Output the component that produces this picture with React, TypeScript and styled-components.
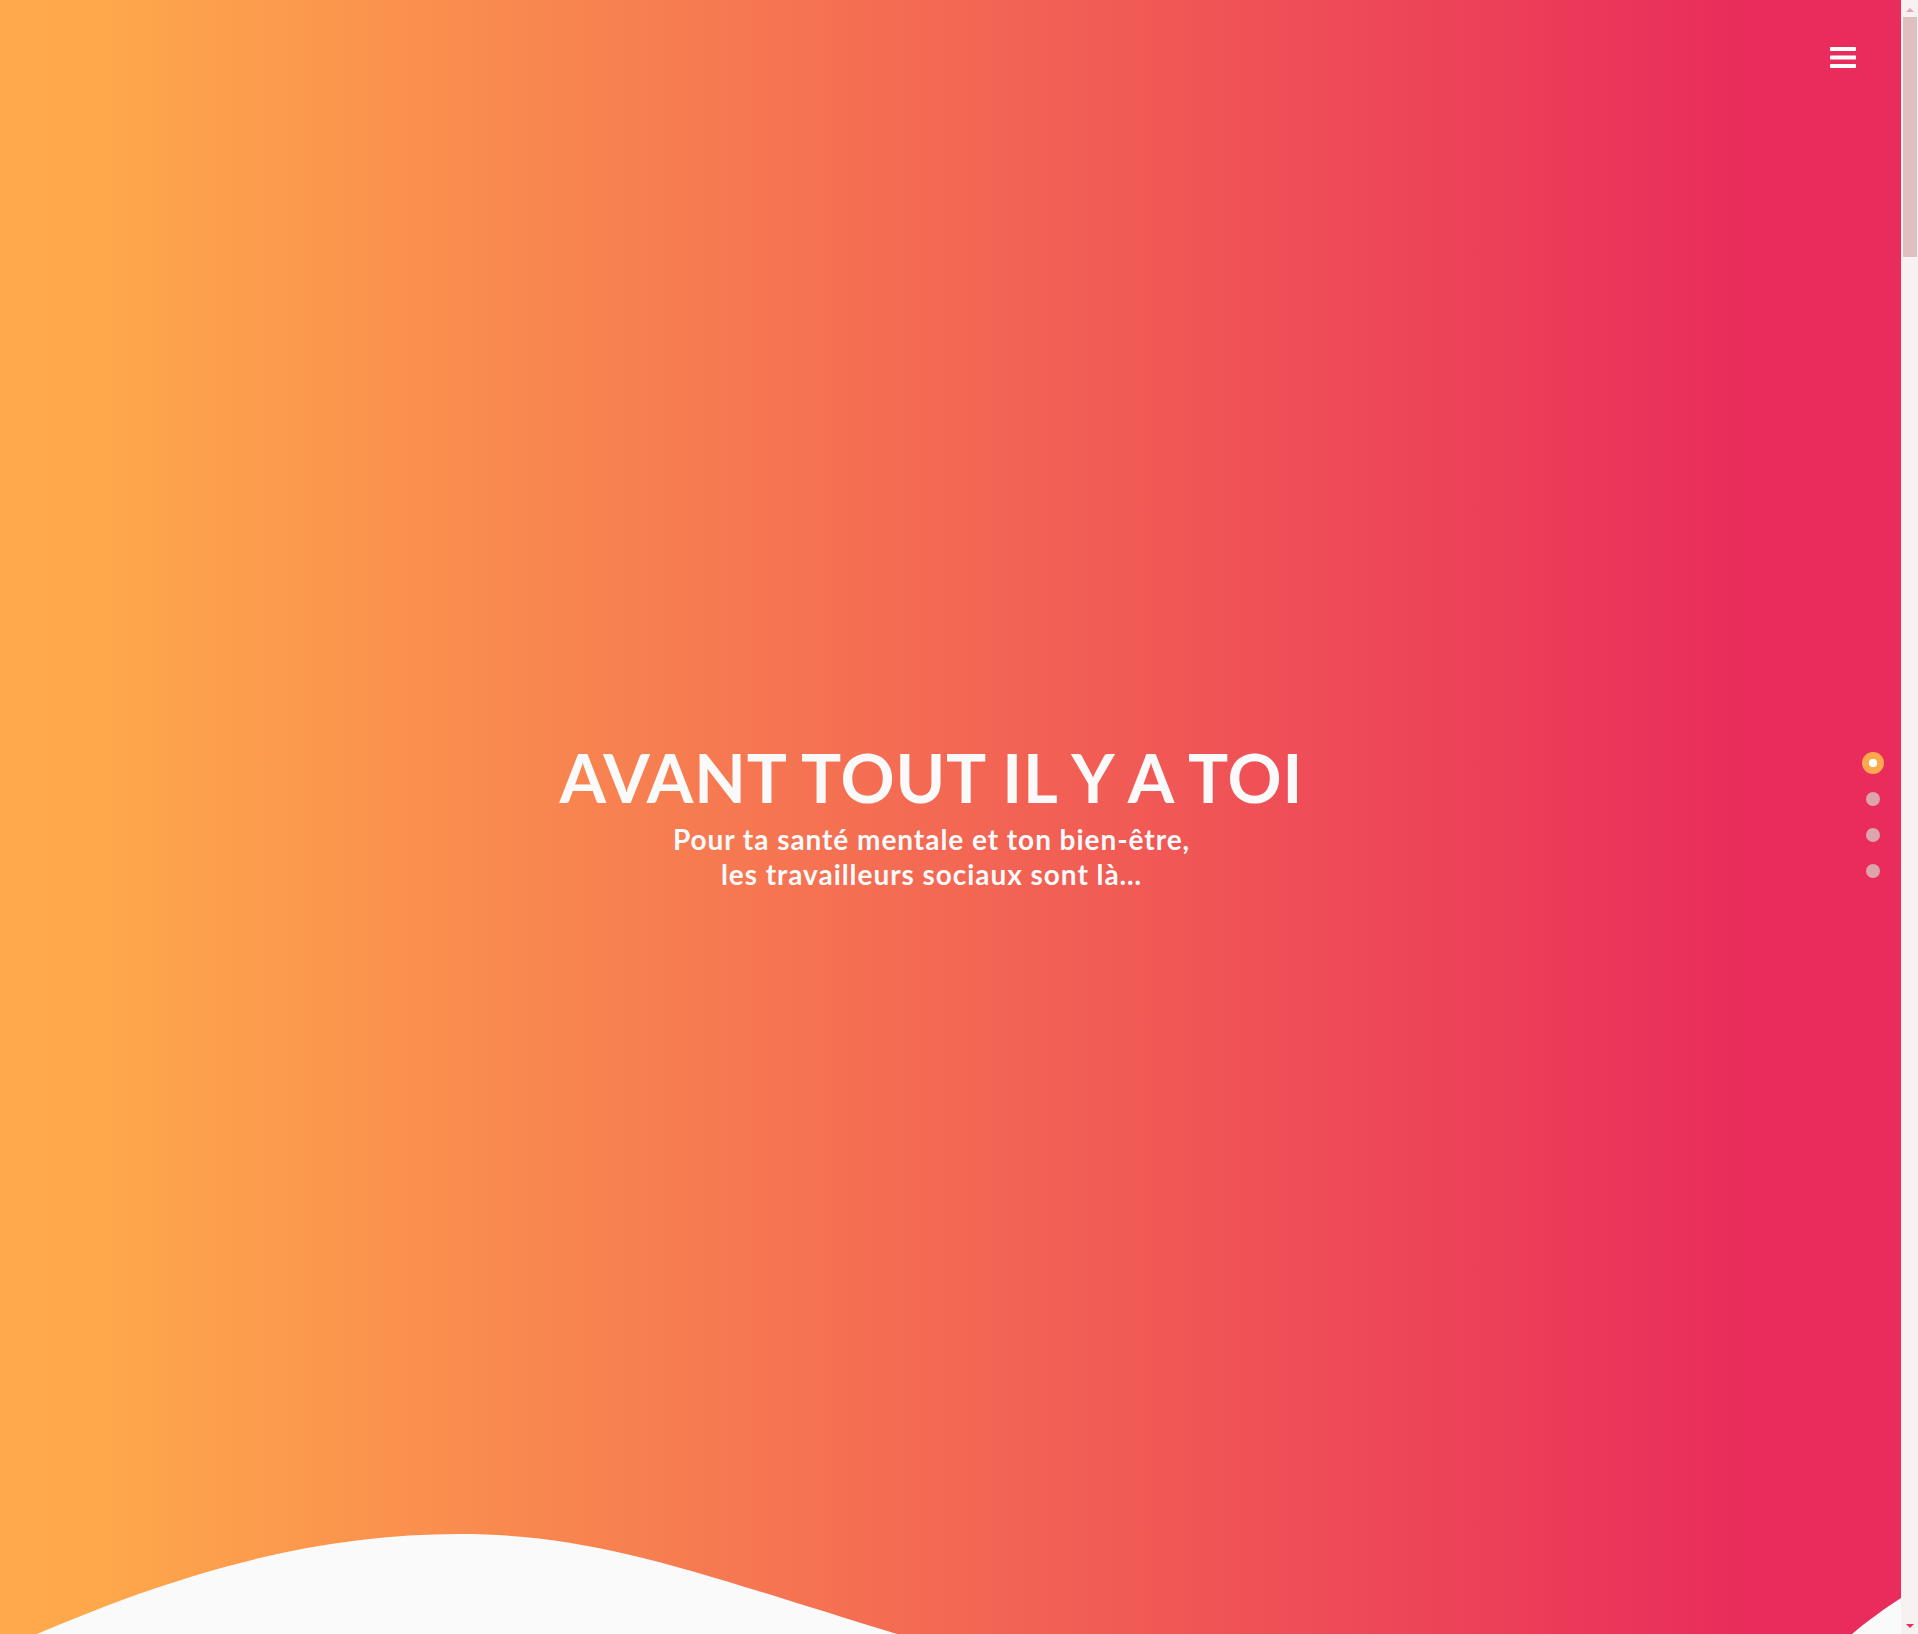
import React from "react";
import styled, { createGlobalStyle } from "styled-components";

const GlobalStyle = createGlobalStyle`
  html {
    scrollbar-width: none;
  }
  html, body {
    margin: 0;
    padding: 0;
    background: #fafafa;
  }
  body {
    font-family: "Lato", "Open Sans", sans-serif;
  }
`;

const Page = styled.div`
  position: relative;
  margin-right: 17px;
`;

const Hero = styled.section`
  position: relative;
  height: 100vh;
  min-height: 1634px;
  background: linear-gradient(
    90deg,
    #fea94b 0%,
    #fea84b 5%,
    #e92c5b 92%,
    #e92c5b 100%
  );
  display: flex;
  align-items: center;
  justify-content: center;
  overflow: hidden;
`;

const MenuButton = styled.button`
  position: absolute;
  top: 47px;
  right: 45px;
  width: 26px;
  height: 21px;
  padding: 0;
  border: none;
  background: transparent;
  cursor: pointer;
  display: flex;
  z-index: 3;
`;

const Content = styled.div`
  display: flex;
  flex-direction: column;
  align-items: center;
  text-align: center;
  padding-right: 38px;
  padding-bottom: 6px;
  box-sizing: border-box;
  width: 100%;
  color: #fafafa;
`;

const Title = styled.h1`
  margin: 0;
  font-family: "Lato", "Open Sans", sans-serif;
  font-weight: 700;
  font-size: 67px;
  line-height: normal;
  letter-spacing: 0.9px;
  color: #fafafa;
`;

const Subtitle = styled.p`
  margin: 5px 0 0;
  font-family: "Lato", "Open Sans", sans-serif;
  font-weight: 700;
  font-size: 28px;
  line-height: 35px;
  letter-spacing: 0.95px;
  color: #fafafa;
`;

const Wave = styled.svg`
  position: absolute;
  left: 0;
  bottom: 0;
  width: 100%;
  height: 100px;
  display: block;
`;

const DotNav = styled.nav`
  position: fixed;
  right: 34px;
  top: 50%;
  transform: translateY(-50%);
  display: flex;
  flex-direction: column;
  gap: 14px;
  z-index: 4;
`;

const DotItem = styled.a<{ $active?: boolean }>`
  width: 22px;
  height: 22px;
  display: flex;
  align-items: center;
  justify-content: center;
  cursor: pointer;

  &::before {
    content: "";
    display: block;
    box-sizing: border-box;
    width: ${(p) => (p.$active ? "22px" : "14px")};
    height: ${(p) => (p.$active ? "22px" : "14px")};
    border-radius: 50%;
    background: ${(p) =>
      p.$active
        ? "radial-gradient(circle, #ffffff 0 4px, #fea94c 4.5px)"
        : "#dca4ab"};
  }
`;

const ScrollRail = styled.div`
  position: fixed;
  top: 0;
  right: 0;
  bottom: 0;
  width: 17px;
  display: flex;
  flex-direction: column;
  background: #f8f1f2;
  z-index: 5;
`;

const RailArrow = styled.div<{ $dir: "up" | "down" }>`
  height: 17px;
  flex: none;
  display: flex;
  align-items: center;
  justify-content: center;

  &::before {
    content: "";
    width: 0;
    height: 0;
    border-left: 4px solid transparent;
    border-right: 4px solid transparent;
    ${(p) =>
      p.$dir === "up"
        ? "border-bottom: 4px solid #e2a7b0; margin-top: 2px;"
        : "border-top: 4px solid #e8305a; margin-bottom: 0;"}
  }
`;

const RailTrack = styled.div`
  flex: 1;
  padding: 0 1px 0 2px;
`;

const RailThumb = styled.div`
  height: 240px;
  background: #e0bfc0;
`;

function BarsIcon() {
  return (
    <svg width="26" height="21" viewBox="0 0 26 21" aria-hidden="true">
      <rect x="0" y="0" width="26" height="4" rx="0.8" fill="#ffffff" />
      <rect x="0" y="8.5" width="26" height="4" rx="0.8" fill="#ffffff" />
      <rect x="0" y="17" width="26" height="4" rx="0.8" fill="#ffffff" />
    </svg>
  );
}

export default function App() {
  const sections = [0, 1, 2, 3];
  return (
    <>
      <GlobalStyle />
      <Page>
        <Hero>
          <MenuButton aria-label="Menu">
            <BarsIcon />
          </MenuButton>
          <Content>
            <Title>AVANT TOUT IL Y A TOI</Title>
            <Subtitle>
              Pour ta santé mentale et ton bien-être,
              <br />
              les travailleurs sociaux sont là…
            </Subtitle>
          </Content>
          <Wave viewBox="0 0 1901 100" preserveAspectRatio="none" aria-hidden="true">
            <path
              d="M37,100 C200,30 330,0 459,0 C600,0 700,40 897,100 Z"
              fill="#fafafa"
            />
            <path
              d="M1852,100 C1866,88 1884,75 1901,64 L1901,100 Z"
              fill="#fafafa"
            />
          </Wave>
        </Hero>
      </Page>
      <DotNav>
        {sections.map((i) => (
          <DotItem key={i} $active={i === 0} />
        ))}
      </DotNav>
      <ScrollRail aria-hidden="true">
        <RailArrow $dir="up" />
        <RailTrack>
          <RailThumb />
        </RailTrack>
        <RailArrow $dir="down" />
      </ScrollRail>
    </>
  );
}
